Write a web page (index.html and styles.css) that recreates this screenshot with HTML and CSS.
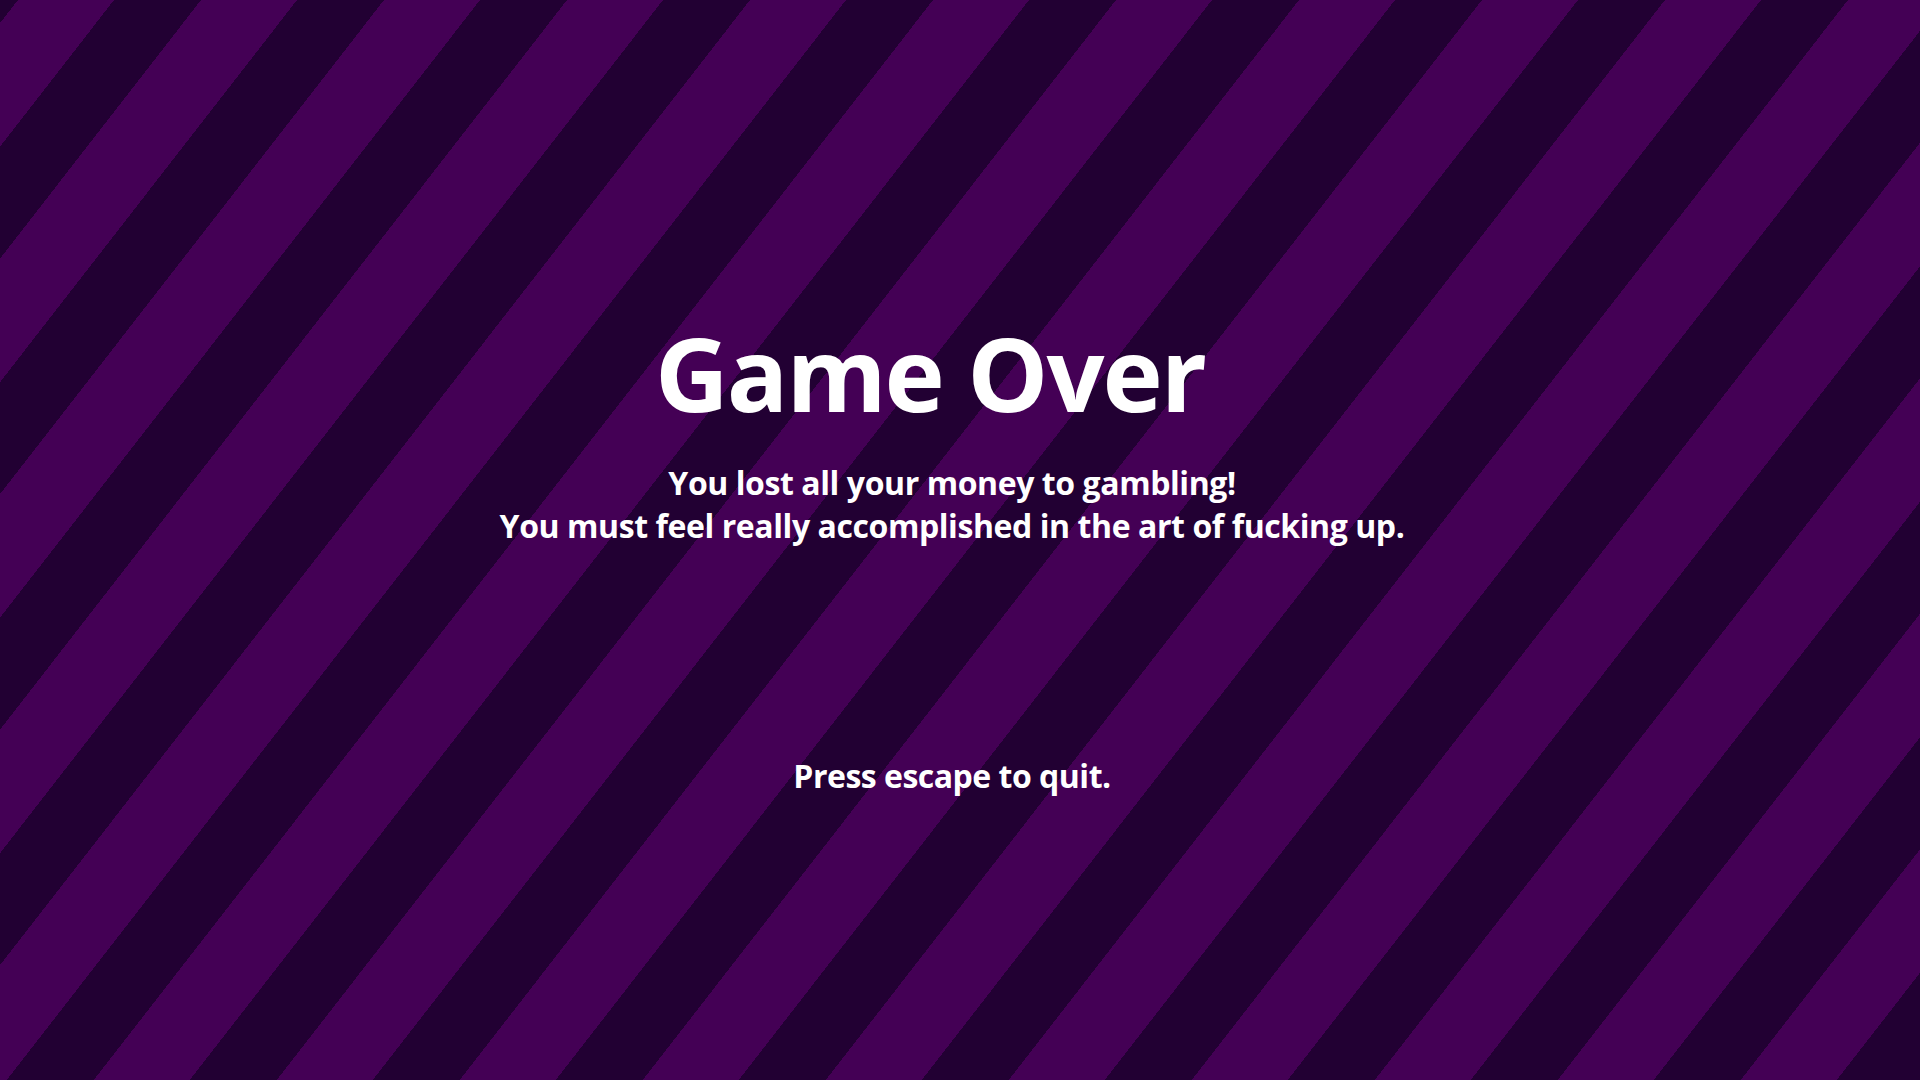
FILE: index.html
```html
<!DOCTYPE html>
<html lang="en">
<head>
<meta charset="utf-8">
<title>Game Over</title>
<link rel="stylesheet" href="styles.css">
</head>
<body>
<main class="screen">
  <h1 class="title">Game Over</h1>
  <p class="message">You lost all your money to gambling!<br>You must feel really accomplished in the art of fucking up.</p>
  <p class="hint">Press escape to quit.</p>
</main>
</body>
</html>
```

FILE: styles.css
```css
html, body {
  margin: 0;
  padding: 0;
}

.screen {
  box-sizing: border-box;
  width: 100%;
  height: 100vh;
  display: flex;
  flex-direction: column;
  align-items: center;
  padding-top: 310px;
  padding-right: 16px;
  background: repeating-linear-gradient(127.85deg,
    #220033 0px, #220033 14.2px,
    #440055 14.2px, #440055 90px,
    #220033 90px, #220033 144.5px);
  color: #ffffff;
  font-family: "Open Sans", "Noto Sans", sans-serif;
  font-weight: 700;
  text-align: center;
}

.title {
  margin: 0;
  padding-right: 44px;
  font-size: 102px;
  line-height: 126px;
  font-weight: 700;
  letter-spacing: -2px;
}

.message {
  margin: 25px 0 0;
  font-size: 32px;
  line-height: 43px;
  letter-spacing: -0.42px;
}

.hint {
  margin: 207px 0 0;
  font-size: 32px;
  line-height: 43px;
  letter-spacing: -0.5px;
}
```
